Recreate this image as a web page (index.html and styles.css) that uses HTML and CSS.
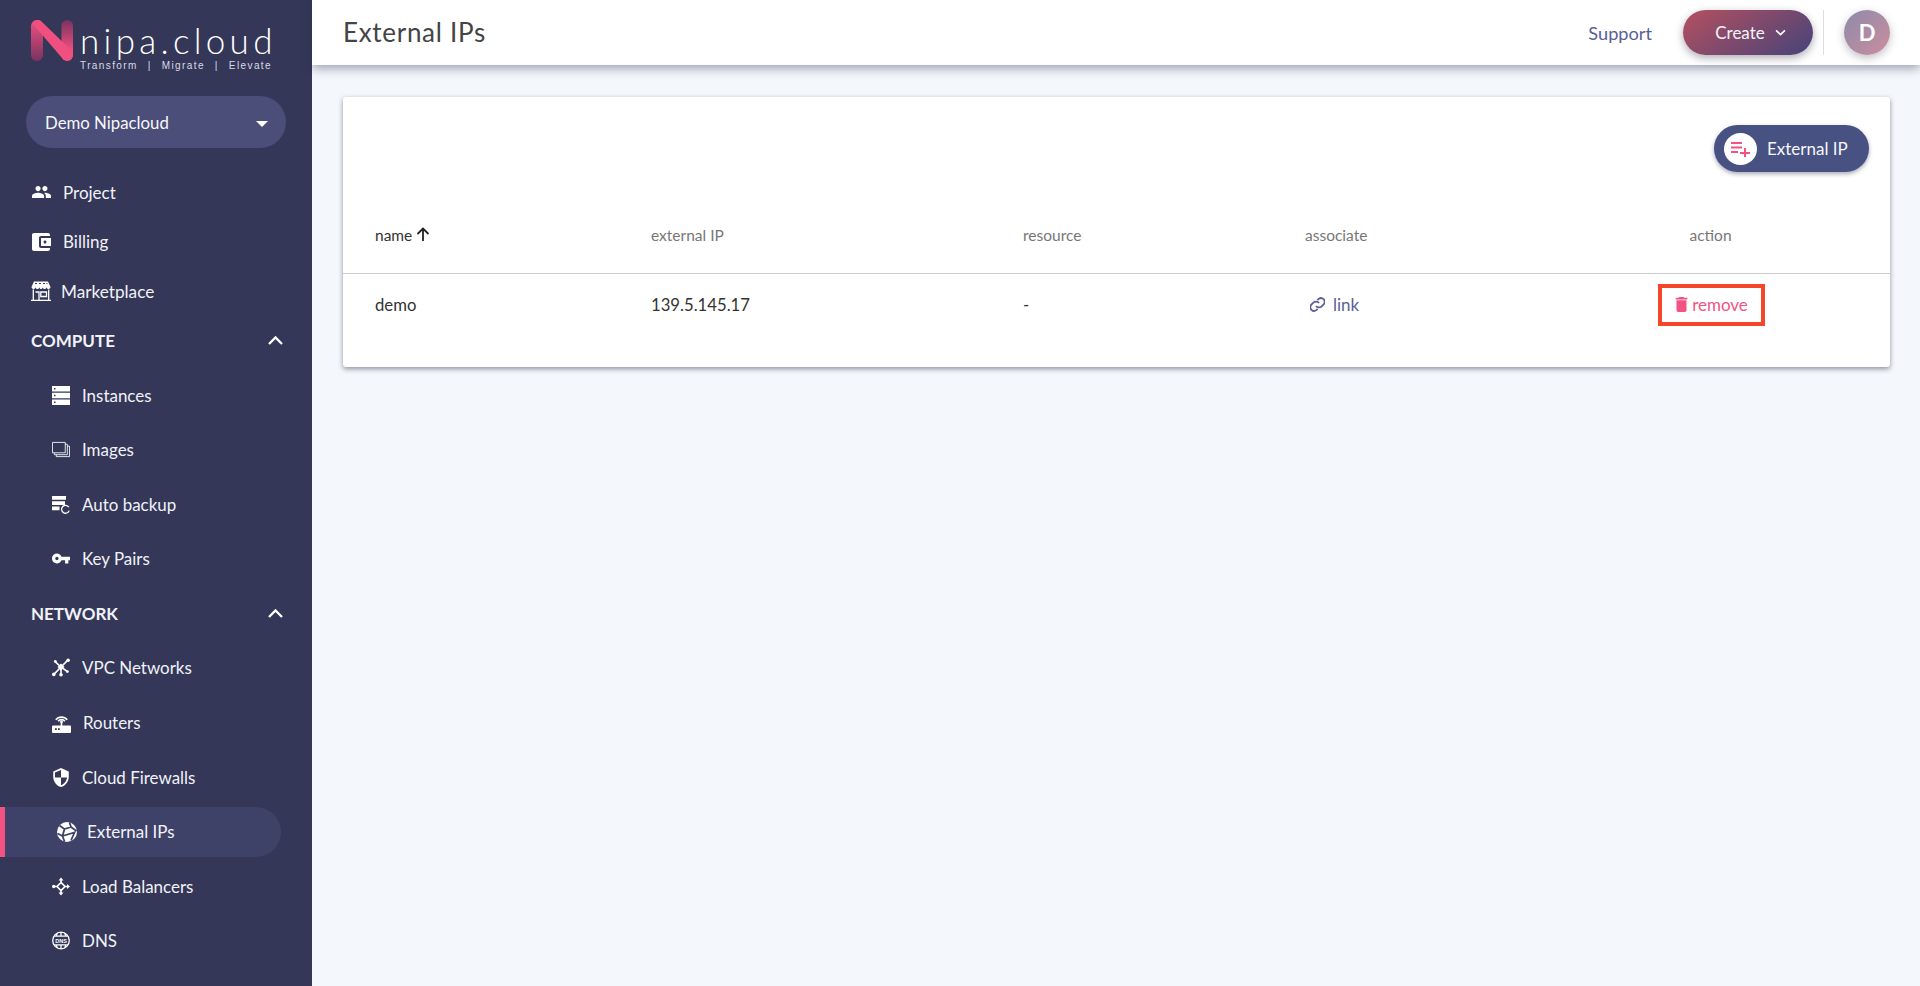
FILE: index.html
```html
<!DOCTYPE html>
<html lang="en">
<head>
<meta charset="utf-8">
<title>External IPs</title>
<link rel="stylesheet" href="styles.css">
</head>
<body>
<div class="app">
  <aside class="sidebar">
    <div class="brand">
      <svg class="brand-mark" viewBox="0 0 42 41" aria-hidden="true">
        <defs>
          <linearGradient id="nl" x1="0" y1="0" x2="0" y2="1"><stop offset="0" stop-color="#f0507f"/><stop offset="1" stop-color="#7a3360"/></linearGradient>
          <linearGradient id="nr" x1="0" y1="0" x2="0" y2="1"><stop offset="0" stop-color="#7a3360"/><stop offset=".75" stop-color="#f0507f"/></linearGradient>
        </defs>
        <rect x="30.500" y="0" width="11.500" height="41" rx="5.750" fill="url(#nr)"/>
        <rect x="0" y="0" width="12" height="41" rx="6" fill="url(#nl)"/>
        <path d="M1.500 3.500 C3.500 -.5 8.500 -1 11 2 L41 31 L41.500 36 C41 41 34 42.500 31 38 Z" fill="#f0507f"/>
      </svg>
      <div class="brand-text">
        <div class="brand-name">nipa.cloud</div>
        <div class="brand-tag"><span>Transform</span><span>|</span><span>Migrate</span><span>|</span><span>Elevate</span></div>
      </div>
    </div>
    <div class="org-select"><span>Demo Nipacloud</span><i class="org-caret"></i></div>
    <nav class="nav">
      <a class="nav-item"><svg class="ic ic-top" viewBox="1 5 22 14"><path d="M16 11c1.660 0 2.990-1.340 2.990-3S17.660 5 16 5c-1.660 0-3 1.340-3 3s1.340 3 3 3zm-8 0c1.660 0 2.990-1.340 2.990-3S9.660 5 8 5C6.340 5 5 6.340 5 8s1.340 3 3 3zm0 2c-2.330 0-7 1.170-7 3.500V19h14v-2.500c0-2.330-4.670-3.500-7-3.500zm8 0c-.29 0-.62.02-.97.05 1.160.84 1.970 1.970 1.970 3.450V19h6v-2.500c0-2.330-4.670-3.500-7-3.500z"/></svg>Project</a>
      <a class="nav-item"><svg class="ic ic-top" viewBox="3 3 19 18"><path d="M21 18v1c0 1.100-.9 2-2 2H5c-1.110 0-2-.9-2-2V5c0-1.100.89-2 2-2h14c1.100 0 2 .9 2 2v1h-9c-1.110 0-2 .9-2 2v8c0 1.100.89 2 2 2h9zm-9-2h10V8H12v8zm4-2.500c-.83 0-1.500-.67-1.500-1.500s.67-1.500 1.500-1.500 1.500.67 1.500 1.500-.67 1.500-1.500 1.500z"/></svg>Billing</a>
      <a class="nav-item nav-market"><svg class="ic ic-shop" viewBox="0 0 20 20"><path d="M3 .5h14l2.500 5.500c0 1.300-1 2-2 2s-1.800-.6-2-1.800c-.2 1.200-1 1.800-1.900 1.800s-1.800-.6-1.900-1.800c-.1 1.200-1 1.800-1.700 1.800s-1.600-.6-1.700-1.800c-.1 1.200-1 1.800-1.900 1.800s-1.700-.6-1.900-1.800C4.300 7.400 3.500 8 2.500 8S.5 7.300.5 6z"/><path class="cut-thin" d="M4 2.500h2M8 2.500h2M12 2.500h2M15.500 2.500h1"/><path class="ln" d="M2.300 8.500v10.500M17.700 8.500v10.500M0 19.400h20M4.500 11h3.500v8M9.800 11h5.700v4.500H9.800z"/></svg>Marketplace</a>

      <div class="nav-head"><span>COMPUTE</span><svg class="chev" viewBox="0 0 15 9"><path d="M1 8 7.500 1.500 14 8"/></svg></div>
      <div class="sub-list">
        <a class="sub-item"><svg class="ic" viewBox="0 0 18 19"><path fill-rule="evenodd" d="M0 0h18v5.500H0zM0 6.750h18v5.500H0zM0 13.500h18V19H0zM2 2v1.500h1.500V2zM2 8.750v1.500h1.500v-1.500zM2 15.500V17h1.500v-1.500z"/></svg>Instances</a>
        <a class="sub-item"><svg class="ic" viewBox="0 0 19 16"><path class="ln thin" d="M.5.500h13.500v11H.5zM14 2.500h2.200v11H2.500v-2M16.200 4.500h2.300v11H4.500v-2"/></svg>Images</a>
        <a class="sub-item"><svg class="ic" viewBox="0 0 18 17"><path d="M0 0h14v3.800H0zM0 5.200h13V9H0zM0 10.400h7.500v3.800H0z"/><path class="ln" d="M16.800 11.200a3.900 3.900 0 1 0 .4 3.400"/></svg>Auto backup</a>
        <a class="sub-item"><svg class="ic" viewBox="1 5 22 14"><path d="M12.650 10C11.830 7.670 9.610 6 7 6c-3.310 0-6 2.690-6 6s2.690 6 6 6c2.610 0 4.830-1.670 5.650-4H17v4h4v-4h2v-4H12.650zM7 14c-1.100 0-2-.9-2-2s.9-2 2-2 2 .9 2 2-.9 2-2 2z"/></svg>Key Pairs</a>
      </div>

      <div class="nav-head"><span>NETWORK</span><svg class="chev" viewBox="0 0 15 9"><path d="M1 8 7.500 1.500 14 8"/></svg></div>
      <div class="sub-list">
        <a class="sub-item"><svg class="ic" viewBox="0 0 19 19"><path class="ln wide" d="M9.500 9 3.500 3.500M9.500 9l7-7M9.500 9 2 16.800M9.500 9v8M9.500 9l6.500 4.500"/><path d="M9.500 5.300 13.200 9l-3.700 3.700L5.800 9z"/><circle cx="3.500" cy="3.200" r="1.500"/><circle cx="17" cy="1.900" r="1.900"/><circle cx="1.900" cy="16.800" r="1.900"/><circle cx="9.500" cy="17.100" r="1.900"/><circle cx="16.200" cy="13.800" r="1.500"/></svg>VPC Networks</a>
        <a class="sub-item"><svg class="ic ic-router" viewBox="0 0 19 20"><path class="ln wide" d="M3.800 6.800a7.300 7.300 0 0 1 11.400 0M6.100 8.200a4.500 4.500 0 0 1 6.800 0"/><circle cx="9.500" cy="8.800" r="1.400"/><path class="ln wide" d="M9.500 9v4"/><path fill-rule="evenodd" d="M1 12.500h17a1 1 0 0 1 1 1V19a1 1 0 0 1-1 1H1a1 1 0 0 1-1-1v-5.500a1 1 0 0 1 1-1zM3 15.300V17h1.800v-1.700zM6 15.300V17h1.800v-1.700z"/></svg>Routers</a>
        <a class="sub-item"><svg class="ic" viewBox="3 1 18 22"><path fill-rule="evenodd" d="M12 1 3 5v6c0 5.550 3.840 10.740 9 12 5.160-1.260 9-6.450 9-12V5l-9-4zm0 11h7c-.53 4.120-3.280 7.790-7 8.940V12H5V6.300l7-3.110V12z"/></svg>Cloud Firewalls</a>
        <a class="sub-item is-active"><svg class="ic ic-globe" viewBox="0 0 20 20"><circle cx="10" cy="10" r="10"/><path class="cut" d="M2.500 3.500 7.500 7 5.500 14 .5 11.500M7.500 7 14 5 12.500 .5M14 5 19.500 9M5.500 14 7.500 19.500M5.500 14 17.500 10.500 14 18.500"/></svg>External IPs</a>
        <a class="sub-item"><svg class="ic" viewBox="0 0 18 18"><path class="ln wide" d="M9 5 5 9l4 4 4-4zM3 9H5M9 5V2.500M9 13v2.500M13 9h2"/><path d="M0 9a1.700 1.700 0 1 0 3.400 0A1.700 1.700 0 1 0 0 9zM9 0 6.500 3h5zM9 18l-2.500-3h5zM18 9l-3-2.500v5z"/></svg>Load Balancers</a>
        <a class="sub-item"><svg class="ic" viewBox="0 0 18 18"><circle class="ln" cx="9" cy="9" r="8.300"/><path class="ln" d="M9 .7v4M9 13.300v4M2.200 4.700h13.600M2.200 13.300h13.600M5.500 1.800C4.500 3 4.200 4 4.200 4.700M12.500 1.800c1 1.200 1.300 2.200 1.300 2.900M5.500 16.200c-1-1.200-1.300-2.200-1.300-2.900M12.500 16.200c1-1.200 1.300-2.200 1.300-2.900"/><text class="dns-mini" x="9" y="11">DNS</text></svg>DNS</a>
      </div>
    </nav>
  </aside>

  <div class="main">
    <header class="topbar">
      <h1 class="page-title">External IPs</h1>
      <div class="top-actions">
        <a class="support">Support</a>
        <button class="create-btn">Create<svg class="create-chev" viewBox="0 0 10 6"><path d="M1 1l4 4 4-4"/></svg></button>
        <span class="divider"></span>
        <span class="avatar">D</span>
      </div>
    </header>

    <section class="card">
      <div class="card-actions">
        <button class="add-btn"><span class="add-icon"><svg viewBox="0 0 20 16"><path d="M0 1h11v2H0zM0 5.500h11v2H0zM0 10h7v2H0zM13 7h2v4h4v2h-4v3h-2v-3H9v-2h4z"/></svg></span>External IP</button>
      </div>
      <div class="table">
        <div class="row row-head">
          <div class="th th-sorted">name<svg class="sort" viewBox="0 0 14 15"><path d="M7 14V1.500M1.500 7 7 1.500 12.500 7"/></svg></div>
          <div class="th">external IP</div>
          <div class="th">resource</div>
          <div class="th">associate</div>
          <div class="th th-action">action</div>
        </div>
        <div class="row row-body">
          <div class="td td-name">demo</div>
          <div class="td">139.5.145.17</div>
          <div class="td">-</div>
          <div class="td"><a class="assoc"><svg viewBox="2 2 20 20"><path d="M10 14a5 5 0 0 0 7.500.5l3-3a5 5 0 0 0-7-7l-1.700 1.700M14 10a5 5 0 0 0-7.500-.5l-3 3a5 5 0 0 0 7 7l1.700-1.700"/></svg>link</a></div>
          <div class="td td-action"><a class="remove"><svg viewBox="5 3 14 18"><path d="M6 19c0 1.100.9 2 2 2h8c1.100 0 2-.9 2-2V7H6v12zM19 4h-3.500l-1-1h-5l-1 1H5v2h14V4z"/></svg>remove</a></div>
        </div>
      </div>
    </section>
  </div>
</div>
</body>
</html>
```

FILE: styles.css
```css
* { box-sizing: border-box; }
html, body { margin: 0; height: 100%; overflow: hidden; }
body { font-family: Lato, "Noto Sans", sans-serif; background: #f4f7fc; color: #333; }
a { text-decoration: none; color: inherit; }
button { font-family: inherit; border: 0; cursor: pointer; }

.app { display: flex; height: 986px; }

.sidebar { width: 312px; flex: none; background: #343757; color: #f1f2f8; overflow: hidden; padding-top: 20px; }
.brand { display: flex; align-items: flex-start; gap: 7px; padding-left: 31px; height: 76px; }
.brand-mark { width: 42px; height: 41px; flex: none; }
.brand-text { width: 192px; }
.brand-name { font-weight: 300; font-size: 35px; line-height: 38px; letter-spacing: 4.300px; color: #fff; white-space: nowrap; margin-top: 1px; }
.brand-tag { display: flex; justify-content: space-between; font-family: "Liberation Sans", sans-serif; font-size: 10px; line-height: 12px; letter-spacing: 1.400px; color: #d9dae6; margin-top: 1px; }

.org-select { margin-left: 26px; width: 260px; height: 52px; border-radius: 26px; background: #4a4e78; display: flex; align-items: center; justify-content: space-between; padding: 0 18px 0 19px; font-size: 16.800px; color: #f7f7fb; }
.org-caret { width: 0; height: 0; border-left: 6.500px solid transparent; border-right: 6.500px solid transparent; border-top: 6.500px solid #fff; margin-top: 3px; }

.nav { margin-top: 19.800px; }
.nav-item, .nav-head { display: flex; align-items: center; height: 49.400px; font-size: 17px; }
.nav-item { padding-left: 32px; gap: 12px; }
.nav-market { gap: 10px; padding-left: 31px; font-size: 17.200px; }
.nav-head { padding: 0 29px 0 31px; justify-content: space-between; font-weight: 700; }
.chev { width: 15px; height: 9px; fill: none; stroke: #fff; stroke-width: 2.400; }
.sub-list { margin: 2.500px 0; }
.sub-item { display: flex; align-items: center; height: 54.600px; padding-left: 52px; gap: 12px; font-size: 16.950px; }
.sub-item.is-active { height: 50px; margin: 2.300px 0; width: 281px; padding-left: 52px; gap: 10px; border-left: 5px solid #f45283; border-radius: 0 25px 25px 0; background: #3e4269; }

.ic { width: 18px; height: 19px; fill: #fff; flex: none; }
.ic-top { width: 19px; height: 18px; }
.ic-shop { width: 20px; height: 20px; }
.ic-router { width: 19px; height: 20px; }
.ic-globe { width: 20px; height: 20px; }
.ln { fill: none; stroke: #fff; stroke-width: 1.300; }
.wide { stroke-width: 1.700; }
.thin { stroke-width: .9; }
.cut { fill: none; stroke: #3e4269; stroke-width: 1.800; }
.cut-thin { fill: none; stroke: #343757; stroke-width: 1; }
.dns-mini { font-family: "Liberation Sans", sans-serif; font-size: 5.500px; font-weight: 700; text-anchor: middle; fill: #fff; }

.main { flex: 1; min-width: 0; display: flex; flex-direction: column; }
.topbar { height: 65px; background: #fff; box-shadow: 0 3px 10px rgba(40, 45, 70, .45); display: flex; align-items: center; justify-content: space-between; padding: 0 30px 0 31px; position: relative; }
.page-title { margin: -2px 0 0; font-size: 26px; font-weight: 400; color: #444; letter-spacing: .7px; }
.top-actions { display: flex; align-items: center; }
.support { font-size: 18.200px; color: #5a5f96; margin-right: 31px; }
.create-btn { width: 130px; height: 45px; border-radius: 23px; background: linear-gradient(145deg, #b5505f 0%, #46437a 100%); color: #f4f4f8; font-size: 17px; display: flex; align-items: center; justify-content: center; gap: 10px; box-shadow: 0 3px 8px rgba(50, 50, 70, .4); padding: 0 0 0 5px; }
.create-chev { width: 11px; height: 7px; fill: none; stroke: #fff; stroke-width: 1.500; }
.divider { width: 1px; height: 45px; background: #ddd; margin: 0 20px 0 10px; }
.avatar { width: 46px; height: 45px; border-radius: 50%; background: linear-gradient(135deg, #8d8bab 0%, #cc8d9d 100%); color: #fff; display: flex; align-items: center; justify-content: center; font-size: 22px; font-weight: 700; box-shadow: 0 3px 8px rgba(50, 50, 70, .3); }

.card { margin: 31.500px 30px 0 31px; height: 270px; background: #fff; border-radius: 3px; box-shadow: 0 2px 5px rgba(40, 45, 70, .5); }
.card-actions { display: flex; justify-content: flex-end; padding: 28.500px 21px 0 0; height: 118.500px; }
.add-btn { width: 155px; height: 47px; border-radius: 24px; background: #475282; color: #f6f6fa; font-size: 17px; display: flex; align-items: center; gap: 10px; padding: 0 0 0 10px; box-shadow: 0 2px 4px rgba(40, 45, 70, .4); }
.add-icon { width: 33px; height: 32px; border-radius: 50%; background: #fff; display: flex; align-items: center; justify-content: center; }
.add-icon svg { width: 20px; height: 16px; fill: #f45283; }

.row { display: grid; grid-template-columns: 276px 372px 282px 306px 1fr; padding-left: 32px; align-items: center; }
.row-head { height: 59px; border-bottom: 1px solid #ccc; padding-bottom: 19px; }
.row-body { height: 64px; padding-bottom: 3px; }
.th { font-size: 15.500px; color: #777; }
.th-sorted { color: #333; display: flex; align-items: center; gap: 4px; }
.sort { width: 14px; height: 15px; fill: none; stroke: #222; stroke-width: 1.800; }
.th-action { width: 207px; padding-right: 8px; text-align: center; }
.td { font-size: 16.700px; color: #333; }
.assoc { display: inline-flex; align-items: center; gap: 8px; color: #5a5f96; padding-left: 5px; font-size: 17px; }
.assoc svg { width: 15px; height: 15px; fill: none; stroke: #5a5f96; stroke-width: 2.400; }
.td-action { width: 209px; padding-right: 8px; display: flex; justify-content: center; }
.remove { width: 107px; height: 42px; border: 4px solid #f4472a; display: flex; align-items: center; justify-content: center; gap: 4px; color: #f45283; font-size: 17px; flex: none; }
.remove svg { width: 13px; height: 15px; fill: #f45283; }
```
